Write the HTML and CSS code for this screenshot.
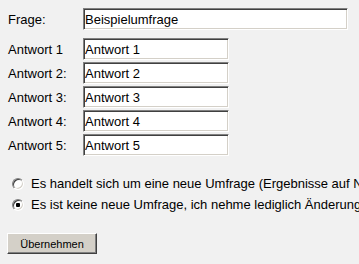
FILE: index.html
```html
<!DOCTYPE html>
<html lang="de">
<head>
  <meta charset="UTF-8">
  <title>Umfrage bearbeiten</title>
  <link rel="stylesheet" href="styles.css">
</head>
<body>
  <form class="poll-form">
    <div class="row row-question">
      <label for="frage">Frage:</label>
      <input type="text" id="frage" class="field field-wide" value="Beispielumfrage">
    </div>
    <div class="row">
      <label for="a1">Antwort 1</label>
      <input type="text" id="a1" class="field" value="Antwort 1">
    </div>
    <div class="row">
      <label for="a2">Antwort 2:</label>
      <input type="text" id="a2" class="field" value="Antwort 2">
    </div>
    <div class="row">
      <label for="a3">Antwort 3:</label>
      <input type="text" id="a3" class="field" value="Antwort 3">
    </div>
    <div class="row">
      <label for="a4">Antwort 4:</label>
      <input type="text" id="a4" class="field" value="Antwort 4">
    </div>
    <div class="row">
      <label for="a5">Antwort 5:</label>
      <input type="text" id="a5" class="field" value="Antwort 5">
    </div>

    <div class="choices">
      <label class="choice"><input type="radio" name="mode" value="neu"> Es handelt sich um eine neue Umfrage (Ergebnisse auf Null setzen)</label>
      <label class="choice"><input type="radio" name="mode" value="edit" checked> Es ist keine neue Umfrage, ich nehme lediglich Änderungen vor</label>
    </div>

    <button type="button" class="submit">Übernehmen</button>
  </form>
</body>
</html>
```

FILE: styles.css
```css
html, body {
  overflow: hidden;
}

body {
  margin: 0;
  padding: 8px;
  background-color: #f1f1f1;
  color: #000;
  font-family: "Liberation Sans", Arial, sans-serif;
  font-size: 13px;
}

.poll-form {
  white-space: nowrap;
}

.row {
  display: flex;
  align-items: center;
  height: 22px;
  margin-bottom: 2px;
}

.row-question {
  margin-bottom: 8px;
}

.row label {
  width: 75px;
  flex: none;
}

.field {
  box-sizing: border-box;
  width: 146px;
  height: 22px;
  margin: 0;
  padding: 0 1px;
  background: #fff;
  border: 1px solid;
  border-color: #808080 #fff #fff #808080;
  box-shadow: inset 1px 1px #404040, inset -1px -1px #d4d0c8;
  font-family: "Liberation Sans", Arial, sans-serif;
  font-size: 13px;
  color: #000;
  outline: none;
}

.field-wide {
  width: 265px;
}

.choices {
  margin-top: 17px;
}

.choice {
  display: flex;
  align-items: center;
  height: 21px;
  padding-left: 4px;
}

.choice input {
  appearance: none;
  -webkit-appearance: none;
  box-sizing: border-box;
  width: 12px;
  height: 12px;
  margin: 0 7px 0 0;
  border-radius: 50%;
  border: 1px solid;
  border-color: #808080 #fff #fff #808080;
  box-shadow: inset 1px 1px #404040, inset -1px -1px #d4d0c8;
  background: #fff;
  flex: none;
}

.choice input:checked {
  background: radial-gradient(circle, #000 0, #000 2px, #fff 2.5px);
}

.submit {
  display: block;
  box-sizing: border-box;
  width: 90px;
  height: 21px;
  margin: 18px 0 0 -1px;
  padding: 0;
  background: #d4d0c8;
  border: 1px solid;
  border-color: #fff #404040 #404040 #fff;
  box-shadow: inset -1px -1px #808080;
  font-family: "Liberation Sans", Arial, sans-serif;
  font-size: 11px;
  color: #000;
}
```
